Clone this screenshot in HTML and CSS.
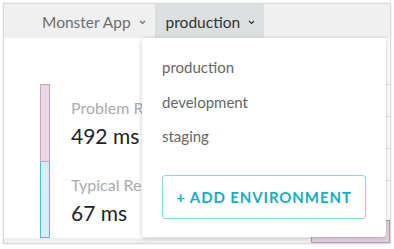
FILE: index.html
```html
<!DOCTYPE html>
<html lang="en">
<head>
    <meta charset="UTF-8">
    <meta name="viewport" content="width=device-width, initial-scale=1.0">
    <title>Monster App</title>
    <link rel="stylesheet" href="styles.css">
</head>
<body>
    <div class="frame">
        <!-- Top navigation -->
        <div class="topbar">
            <div class="nav-item app">
                Monster App
                <svg class="chevron" width="7" height="5" viewBox="0 0 7 5"><polyline points="1,1 3.5,3.5 6,1" fill="none" stroke="currentColor" stroke-width="1.1"/></svg>
            </div>
            <div class="nav-item env">
                production
                <svg class="chevron" width="7" height="5" viewBox="0 0 7 5"><polyline points="1,1 3.5,3.5 6,1" fill="none" stroke="currentColor" stroke-width="1.1"/></svg>
            </div>
        </div>

        <!-- Page content behind the menu -->
        <div class="main">
            <div class="bar-col">
                <div class="bar problem"></div>
                <div class="bar typical"></div>
            </div>
            <div class="stats">
                <div class="label">Problem Requests</div>
                <div class="value">492 ms</div>
                <div class="label second">Typical Requests</div>
                <div class="value">67 ms</div>
            </div>
            <div class="side">
                <div class="row"></div>
                <div class="row"></div>
                <div class="row"></div>
                <div class="row"></div>
                <div class="pink-box"></div>
            </div>
        </div>

        <!-- Environment menu -->
        <div class="dropdown">
            <div class="menu-item">production</div>
            <div class="menu-item">development</div>
            <div class="menu-item">staging</div>
            <button class="add-button">+ ADD ENVIRONMENT</button>
        </div>
    </div>
</body>
</html>
```

FILE: styles.css
```css
body {
    margin: 0;
    background: #fff;
    font-family: 'Lato', 'Open Sans', sans-serif;
}

.frame {
    position: relative;
    margin: 3px;
    height: 239px;
    border: 1px solid #d9d9d9;
    box-shadow: 0 0 2px rgba(0, 0, 0, 0.12);
    display: flex;
    flex-direction: column;
    overflow: hidden;
}

/* Top navigation */
.topbar {
    height: 34px;
    background: #f0f0f0;
    display: flex;
    align-items: stretch;
    padding-left: 38px;
    flex-shrink: 0;
}

.nav-item {
    display: flex;
    align-items: center;
    font-size: 15.5px;
    padding-top: 1px;
}

.nav-item .chevron {
    margin-left: 8px;
    margin-top: 1px;
}

.app {
    color: #6e6e6e;
    padding-right: 9px;
}

.env {
    color: #333;
    background: #dcdfe0;
    padding: 1px 9px 0 11px;
}

/* Content */
.main {
    flex: 1;
    display: flex;
    background: #fff;
    box-shadow: inset 0 -5px 0 #efefef;
}

.bar-col {
    margin-left: 36px;
    width: 10px;
    padding: 46px 0 5px;
    display: flex;
    flex-direction: column;
    flex-shrink: 0;
}

.bar {
    box-sizing: border-box;
}

.bar.problem {
    height: 78px;
    background: #ead7e4;
    border: 1px solid #c9a5bd;
}

.bar.typical {
    flex: 1;
    background: #d2f0f4;
    border: 1px solid #3fc4d1;
    border-top: none;
}

/* cut off where the menu covers it */
.stats {
    margin-left: 21px;
    padding-top: 60px;
    white-space: nowrap;
    width: 71px;
    overflow: hidden;
    flex-shrink: 0;
}

.label {
    font-size: 16px;
    line-height: 20px;
    color: #ababab;
}

.label.second {
    margin-top: 26px;
}

.value {
    margin-top: 5px;
    font-size: 21px;
    line-height: 26px;
    color: #222;
}

.side {
    margin-left: auto;
    width: 79px;
    padding-top: 46px;
    display: flex;
    flex-direction: column;
}

.row {
    height: 32px;
    border-top: 1px solid #e6e6e6;
    box-sizing: border-box;
}

.pink-box {
    flex: 1;
    margin-top: 8px;
    background: #e3d2de;
    border: 1px solid #b89cb0;
}

/* Dropdown */
.dropdown {
    position: absolute;
    left: 138px;
    top: 34px;
    width: 244px;
    height: 199px;
    box-sizing: border-box;
    padding: 12px 20px 0;
    background: #fff;
    border-radius: 3px;
    box-shadow: 0 1px 5px rgba(0, 0, 0, 0.22);
}

.menu-item {
    font-size: 15px;
    line-height: 20.5px;
    padding: 7px 0;
    color: #666;
}

.add-button {
    margin-top: 21px;
    width: 204px;
    height: 44px;
    background: #fff;
    border: 1px solid #8ad4dc;
    border-radius: 3px;
    color: #17adc3;
    font-family: 'Lato', 'Open Sans', sans-serif;
    font-size: 15px;
    font-weight: bold;
    letter-spacing: 0.9px;
    cursor: pointer;
}
```
